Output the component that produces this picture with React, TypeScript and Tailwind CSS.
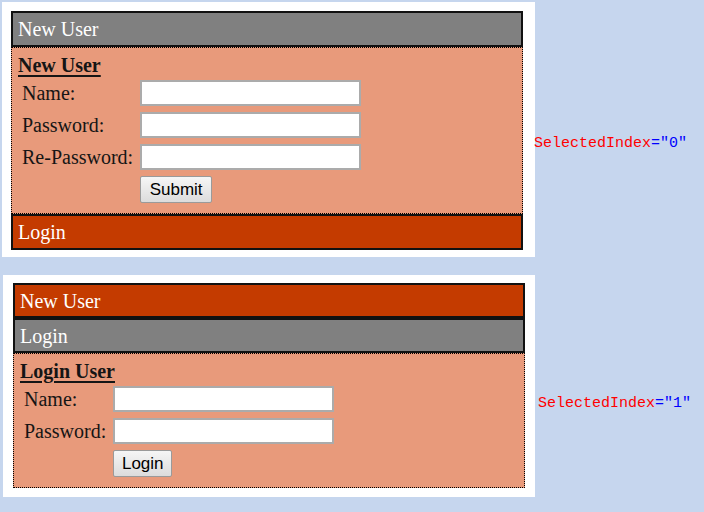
import React from 'react';

type Pane = { header: string };

type Field = { label: string };

const serif = "font-['Liberation_Serif','Times_New_Roman',serif]";

const Accordion: React.FC<{
  panes: Pane[];
  selectedIndex: number;
  headerH: string;
  children: React.ReactNode;
}> = ({ panes, selectedIndex, headerH, children }) => {
  return (
    <div className="w-[512px] flex flex-col">
      {panes.map((p, i) => (
        <React.Fragment key={p.header}>
          <div
            className={`${headerH} ${i === selectedIndex ? 'bg-[#808080]' : 'bg-[#C43B00]'} border-2 border-[#111] flex items-center pl-[5px] text-white text-[20px] ${serif}`}
          >
            {p.header}
          </div>
          {i === selectedIndex && (
            <div className="bg-[#E89A7B] border border-dotted border-black">{children}</div>
          )}
        </React.Fragment>
      ))}
    </div>
  );
};

const Form: React.FC<{ title: string; fields: Field[]; button: string; btnW: string }> = ({
  title,
  fields,
  button,
  btnW,
}) => (
  <div className={`pt-[5px] pl-[6px] pb-[10px] text-[#151515] ${serif}`}>
    <div className="text-[20px] leading-[24px] font-bold underline underline-offset-[3px]">{title}</div>
    <div className="mt-[3px] ml-[4px] grid grid-cols-[auto_auto] justify-start gap-x-[7px] gap-y-[6px] items-center">
      {fields.map((f) => (
        <React.Fragment key={f.label}>
          <div className="text-[20px] leading-[24px]">{f.label}</div>
          <input
            type={f.label.includes('Password') ? 'password' : 'text'}
            className="w-[221px] h-[26px] bg-white border-2 border-[#ABABAB] outline-none"
          />
        </React.Fragment>
      ))}
      <div />
      <button
        className={`${btnW} h-[27px] border border-[#9A9A9A] rounded-[2px] bg-gradient-to-b from-[#F6F6F6] to-[#DCDCDC] text-[17px] text-black font-['Liberation_Sans',Arial,sans-serif]`}
      >
        {button}
      </button>
    </div>
  </div>
);

const Note: React.FC<{ index: number }> = ({ index }) => (
  <div className="font-['Liberation_Mono','Courier_New',monospace] text-[15px] leading-[20px] whitespace-nowrap">
    <span className="text-[#FF0000]">SelectedIndex</span>
    <span className="text-[#0000FF]">="{index}"</span>
  </div>
);

export default function App() {
  const panes = [{ header: 'New User' }, { header: 'Login' }];
  return (
    <div className="w-[704px] h-[512px] bg-[#C6D6EE] overflow-hidden pt-[2px] pl-[2px] flex flex-col gap-[18px]">
      <div className="flex items-start">
        <div className="w-[533px] h-[255px] bg-white pt-[9px] pl-[9px]">
          <Accordion panes={panes} selectedIndex={0} headerH="h-[36px]">
            <Form
              title="New User"
              fields={[{ label: 'Name:' }, { label: 'Password:' }, { label: 'Re-Password:' }]}
              button="Submit"
              btnW="w-[72px]"
            />
          </Accordion>
        </div>
        <div className="ml-[-1px] mt-[132px]">
          <Note index={0} />
        </div>
      </div>

      <div className="flex items-start ml-[1px]">
        <div className="w-[532px] h-[222px] bg-white pt-[8px] pl-[10px]">
          <Accordion panes={panes} selectedIndex={1} headerH="h-[35px]">
            <Form
              title="Login User"
              fields={[{ label: 'Name:' }, { label: 'Password:' }]}
              button="Login"
              btnW="w-[59px]"
            />
          </Accordion>
        </div>
        <div className="ml-[3px] mt-[119px]">
          <Note index={1} />
        </div>
      </div>
    </div>
  );
}
